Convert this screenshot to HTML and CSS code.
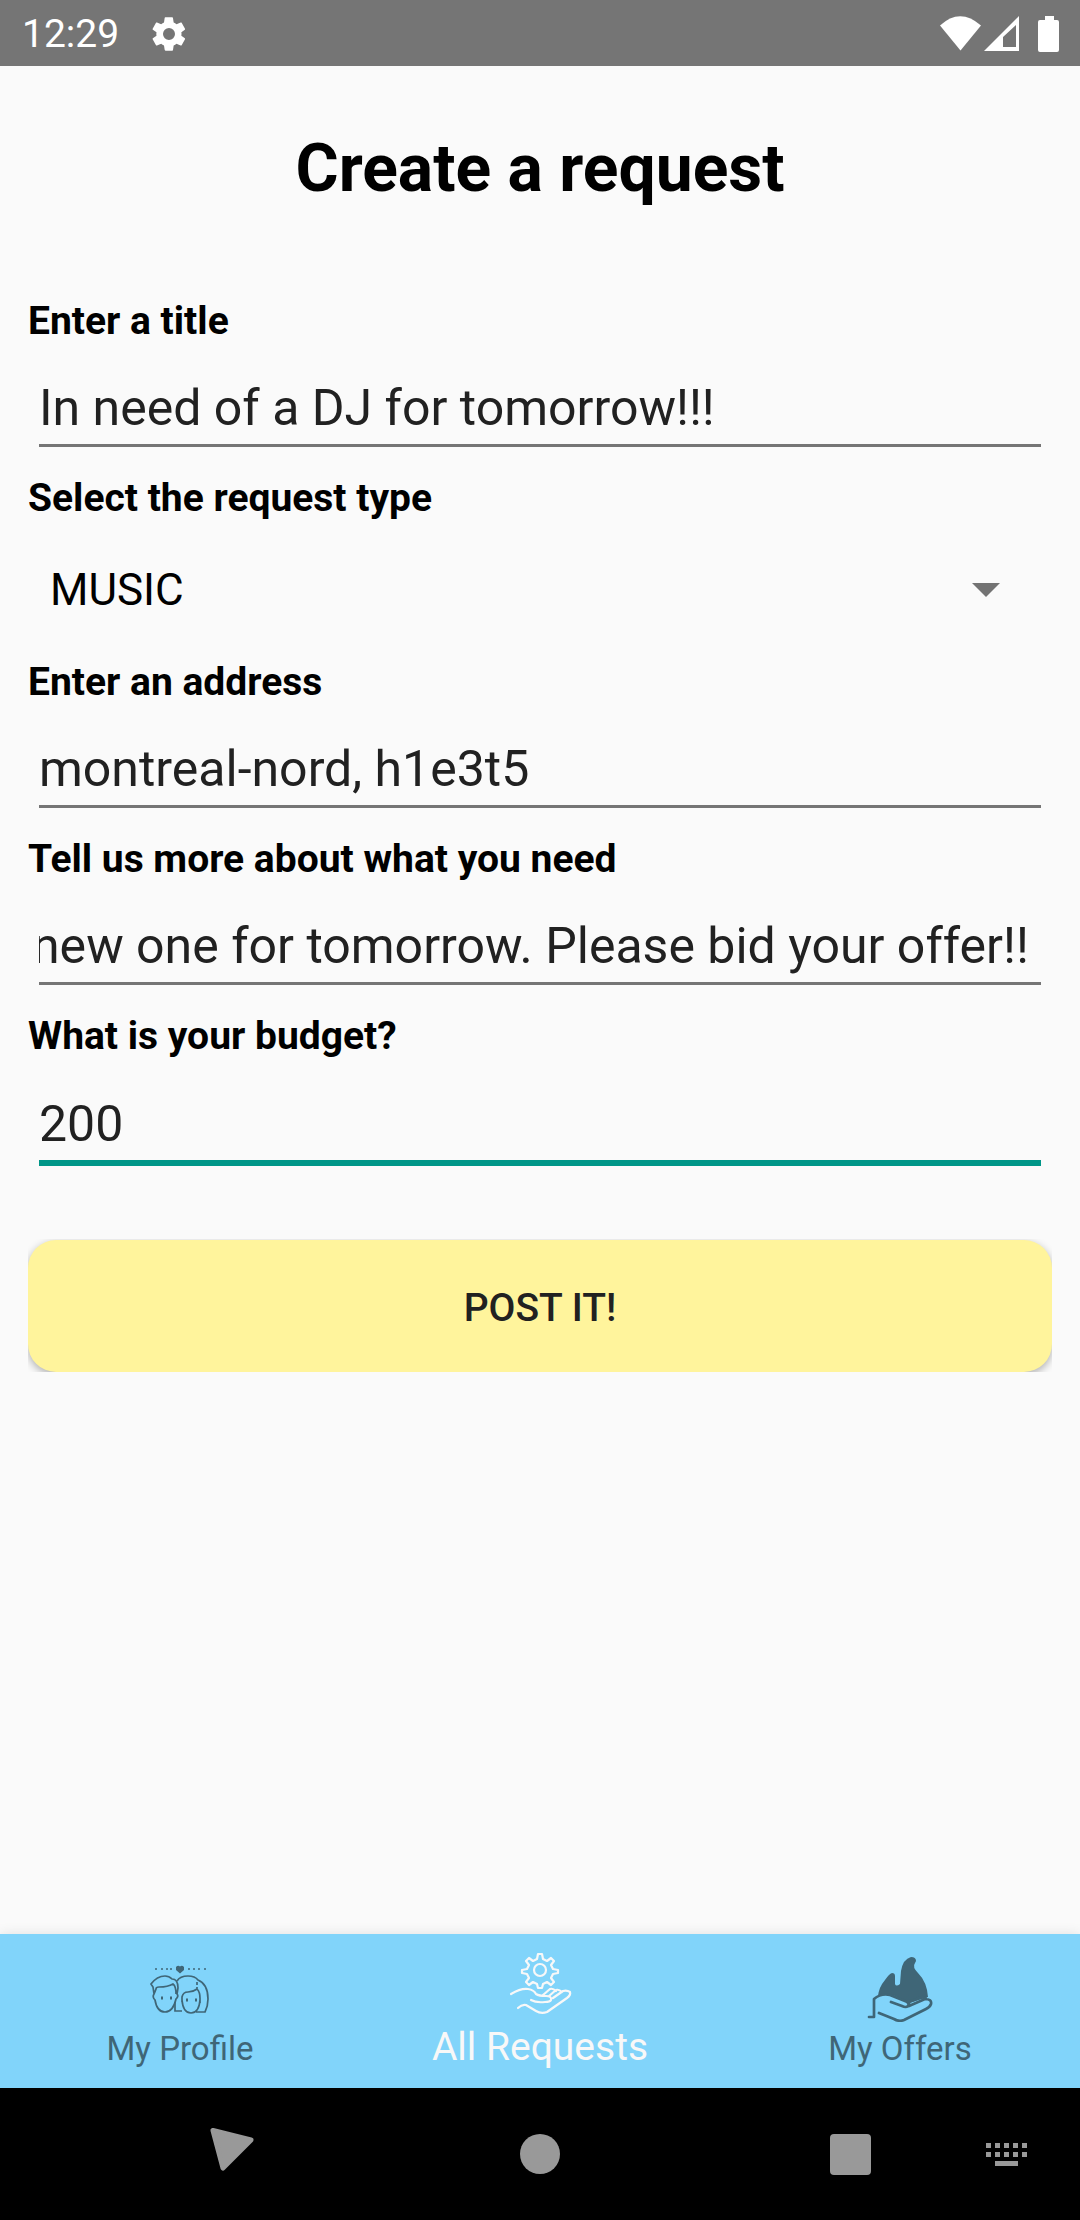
FILE: index.html
```html
<!DOCTYPE html>
<html lang="en">
<head>
<meta charset="utf-8">
<meta name="viewport" content="width=device-width, initial-scale=1">
<title>Create a request</title>
<link rel="stylesheet" href="styles.css">
</head>
<body>
<header class="status">
  <span class="clock">12:29</span>
  <svg class="gear" viewBox="0 0 24 24" fill="#fff" aria-hidden="true"><path d="M19.4 13c0-.3.1-.6.1-1s0-.7-.1-1l2.100-1.600c.2-.2.2-.4.1-.6l-2-3.500c-.1-.2-.4-.3-.6-.2l-2.500 1c-.5-.4-1.100-.7-1.700-1l-.4-2.600c0-.3-.2-.5-.5-.5h-4c-.2 0-.5.2-.5.4L9 5.100c-.6.2-1.100.6-1.700 1l-2.500-1c-.2-.1-.5 0-.6.2l-2 3.500c-.1.2-.1.5.1.6L4.500 11c0 .3-.1.700-.1 1s0 .7.1 1l-2.200 1.600c-.2.2-.2.4-.1.6l2 3.500c.1.2.4.3.6.2l2.500-1c.5.4 1.100.7 1.700 1l.4 2.600c0 .3.2.5.5.5h4c.3 0 .5-.2.5-.4l.4-2.700c.6-.2 1.200-.6 1.700-1l2.500 1c.2.1.5 0 .6-.2l2-3.500c.1-.2.1-.5-.1-.6zM12 15.600a3.600 3.600 0 1 1 0-7.200 3.600 3.600 0 0 1 0 7.200z"/></svg>
  <svg class="signals" viewBox="0 0 120 36" fill="#fff" aria-hidden="true"><path d="M0 9.500Q20-9 41 9.500L20.500 34.500z"/><path fill-rule="evenodd" d="M79 0v35H44zM76 9L63 21v10h13z"/><path d="M105 0h9v4h3a2 2 0 0 1 2 2v28a2 2 0 0 1-2 2h-17a2 2 0 0 1-2-2V6a2 2 0 0 1 2-2h5z"/></svg>
</header>
<main class="page">
  <h1>Create a request</h1>
  <form class="form">
    <label for="title">Enter a title</label>
    <input class="field" id="title" type="text" value="In need of a DJ for tomorrow!!!">
    <label for="type">Select the request type</label>
    <div class="picker">
      <select id="type"><option>MUSIC</option></select>
      <svg class="caret" viewBox="0 0 28 14" fill="#737373" aria-hidden="true"><path d="M0 0h28L14 14z"/></svg>
    </div>
    <label for="address">Enter an address</label>
    <input class="field" id="address" type="text" value="montreal-nord, h1e3t5">
    <label for="details">Tell us more about what you need</label>
    <input class="field" id="details" type="text" value="new one for tomorrow. Please bid your offer!!">
    <label for="budget">What is your budget?</label>
    <input class="field active" id="budget" type="text" value="200">
    <div class="action"><button class="post" type="button">POST IT!</button></div>
  </form>
</main>
<nav class="tabs">
  <a class="tab" href="#profile">
    <svg viewBox="0 0 66 66" fill="none" stroke="currentColor" stroke-width="1.700" aria-hidden="true">
      <path d="M8 13h2M14 13h2M19 13h2M23 13h2M41 13h2M46 13h2M51 13h2M57 13h2"/>
      <path fill="currentColor" stroke="none" d="M29 11q2-2 4-.500 2-1.500 4 .500v3l-4 3.500-4-3.500z"/>
      <path d="M7 38L6 31l-2-3q6-8 14-8 4 0 7 3 6 0 6 9l-1 6q2 2-1 5-3 13-11 13T8 44q-3-3-1-6l2-5q0-2 3-2 9 0 14-3 3 2 3 10"/>
      <path d="M30 25q3-5 11-5 7 0 10 4 10 4 10 19 0 7-3 13h-9M28 46v9h7M35 46V41q1-5 6-5 5 0 9-3 3 3 3 9v5M35 44q1 13 9 13t9-13M50 26v3M50 31v2"/>
      <path d="M14 42h2M23 42h2M39 44h2M48 44h2" stroke-width="3"/>
    </svg>
    <span>My Profile</span>
  </a>
  <a class="tab current" href="#requests">
    <svg viewBox="0 0 66 66" fill="none" stroke="currentColor" stroke-width="2.200" stroke-linejoin="round" stroke-linecap="round" aria-hidden="true">
      <path d="M31 2h4l1 5 4 2 4-3 3 3-3 4 2 4 5 1v3l-5 1-2 4 3 4-3 3-4-3-4 2-1 4h-4l-1-4-4-2-4 3-3-3 3-4-2-4-5-1v-3l5-1 2-4-3-4 3-3 4 3 4-2z"/>
      <circle cx="33" cy="18" r="6"/>
      <path d="M4 42q10-6 17-5 6 1 8 5 3 2 10 2 6 0 5 4-1 2-6 2-9 1-14-2M36 43l7-6q3-1 6 2M42 44l7-6q3-1 6 2M46 46l10-7q4-1 7 1 1 3-3 6L40 60q-6 2-11-1l-10-6q-4-1-8 3"/>
    </svg>
    <span>All Requests</span>
  </a>
  <a class="tab" href="#offers">
    <svg viewBox="0 0 66 66" fill="none" stroke="currentColor" stroke-width="2.700" stroke-linejoin="round" stroke-linecap="round" aria-hidden="true">
      <path fill="currentColor" stroke="none" d="M11 40q1-9 7-16 4-6 7-7 3 0 3 3v8q1 3 5 0l1-13Q36 3 44 1q5 0 5 4l-1 2q-3 4 3 10 9 9 10 24L42 47l-14-7q-8-3-17 0z"/>
      <path d="M2 61h5V43q7-6 16-4l15 6q5 2 3 5-2 2-6 0l-11-4M42 44v5M42 46l13-5q5 0 3 2l-16 7M58 43q7 0 6 5-1 3-5 5L37 64q-5 2-10-1l-15-6"/>
    </svg>
    <span>My Offers</span>
  </a>
</nav>
<footer class="system">
  <svg viewBox="0 0 1080 132" fill="#999" aria-hidden="true">
    <path stroke="#999" stroke-width="5" stroke-linejoin="round" d="M213 42.500L251 52 223 80z"/>
    <circle cx="540" cy="66" r="20"/>
    <rect x="830" y="46" width="41" height="41" rx="4"/>
    <path d="M986 55h5v5h-5zM995 55h5v5h-5zM1004 55h5v5h-5zM1013 55h5v5h-5zM1022 55h5v5h-5zM986 64h5v5h-5zM995 64h5v5h-5zM1004 64h5v5h-5zM1013 64h5v5h-5zM1022 64h5v5h-5zM995 73h23v5h-23z"/>
  </svg>
</footer>
<script src="script.js"></script>
</body>
</html>
```
FILE: styles.css
```css
* {
  box-sizing: border-box;
}
body {
  margin: 0;
  min-height: 100vh;
  display: flex;
  flex-direction: column;
  font-family: Roboto, sans-serif;
  background: #fafafa;
  color: #000;
}
.status {
  height: 66px;
  padding: 2px 20px 0 22px;
  background: #757575;
  display: flex;
  align-items: center;
  color: #fff;
  font-size: 39px;
}
.gear {
  width: 40px;
  margin-left: 30px;
}
.signals {
  width: 120px;
  margin-left: auto;
}
.page {
  flex: 1;
  padding: 0 28px;
}
h1 {
  margin: 64px 0 90px;
  font-size: 66px;
  line-height: 78px;
  text-align: center;
}
.form {
  display: flex;
  flex-direction: column;
}
label {
  font-size: 39px;
  line-height: 46px;
  font-weight: 700;
}
.field {
  height: 103px;
  margin: 0 11px 28px;
  padding: 35px 12px 7px 0;
  border: 0;
  border-bottom: 3px solid #757575;
  border-radius: 0;
  outline: 0;
  background: transparent;
  color: #212121;
  font: 50px Roboto, sans-serif;
}
.field.active {
  height: 107px;
  border-bottom: 6px solid #009688;
}
.picker {
  display: flex;
  align-items: center;
  position: relative;
  height: 138px;
}
select {
  appearance: none;
  width: 100%;
  padding: 0 22px;
  border: 0;
  background: transparent;
  color: #000;
  font: 44px Roboto, sans-serif;
}
.caret {
  position: absolute;
  right: 52px;
  width: 28px;
  pointer-events: none;
}
.action {
  margin-top: 45px;
  padding-top: 1px;
  overflow: hidden;
}
.post {
  display: block;
  width: 100%;
  height: 132px;
  padding: 4px 0 0;
  border: 0;
  border-radius: 28px;
  background: #fff49c;
  box-shadow: 0 3px 8px rgba(0, 0, 0, .3);
  color: #212121;
  font: 500 39px Roboto, sans-serif;
}
.tabs {
  display: grid;
  grid-template-columns: repeat(3, 1fr);
  height: 154px;
  background: #81d4fa;
  box-shadow: 0 0 12px rgba(0, 0, 0, .1);
}
.tab {
  display: flex;
  flex-direction: column;
  align-items: center;
  gap: 4px;
  padding-top: 22px;
  color: #3f6677;
  font-size: 33px;
  line-height: 46px;
  text-decoration: none;
}
.tab svg {
  width: 66px;
  height: 66px;
}
.tab.current {
  gap: 6px;
  padding-top: 18px;
  color: #f8f8f8;
  font-size: 39px;
}
.system {
  position: relative;
  background: #000;
}
.system svg {
  display: block;
  width: 100%;
}
```
FILE: script.js
```js
// Show the end of the longer description, as after typing it.
const details = document.getElementById('details');
details.scrollLeft = details.scrollWidth;
```
